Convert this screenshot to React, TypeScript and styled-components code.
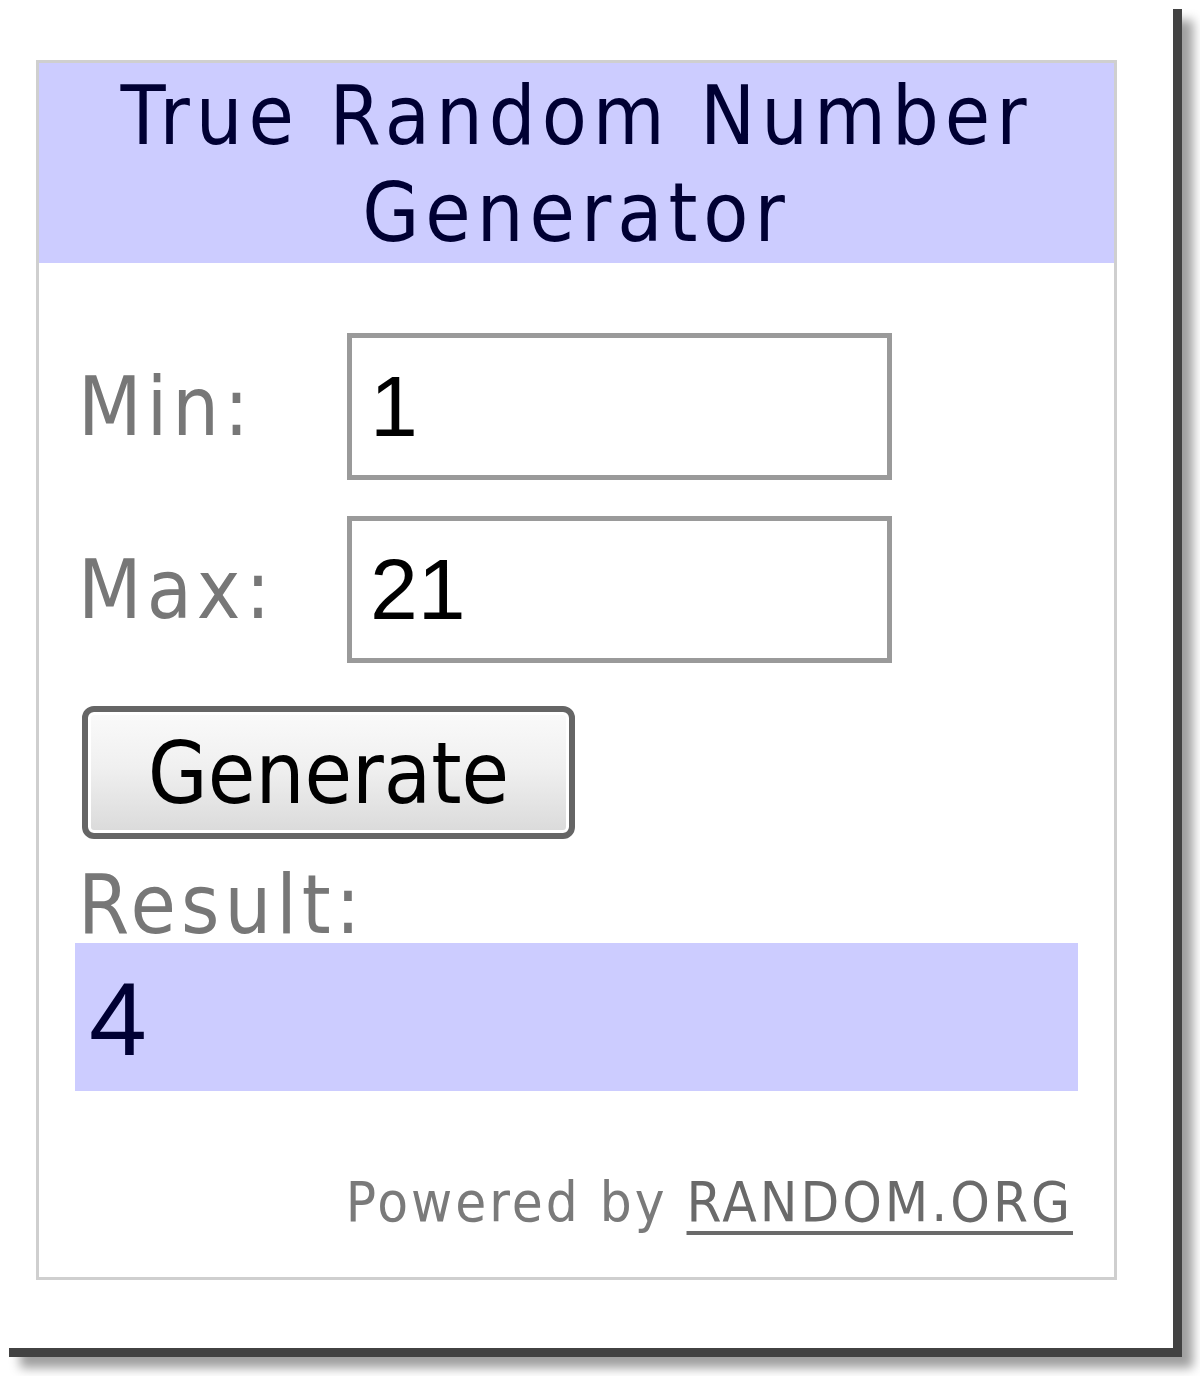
import * as React from "react";
import styled, { createGlobalStyle } from "styled-components";

const GlobalStyle = createGlobalStyle`
  html, body {
    margin: 0;
    padding: 0;
    background: #ffffff;
  }
  body {
    width: 1200px;
    height: 1376px;
    overflow: hidden;
  }
`;

const Card = styled.div`
  width: 1173px;
  height: 1348px;
  box-sizing: border-box;
  padding: 60px 0 0 36px;
  background: #ffffff;
  box-shadow: 9px 9px 0 #424242, 20px 20px 10px rgba(0, 0, 0, 0.38);
`;

const Widget = styled.div`
  width: 1081px;
  height: 1220px;
  box-sizing: border-box;
  border: 3px solid #cfcfcf;
  display: flex;
  flex-direction: column;
`;

const Header = styled.div`
  height: 200px;
  background: #ccccff;
  color: #000033;
  font-family: "DejaVu Sans Condensed", "DejaVu Sans", sans-serif;
  font-size: 82px;
  letter-spacing: 6px;
  line-height: 97px;
  text-align: center;
  padding-top: 4px;
  box-sizing: border-box;
`;

const Body = styled.div`
  flex: 1;
  display: flex;
  flex-direction: column;
  padding: 70px 36px 0 36px;
`;

const Row = styled.div`
  display: grid;
  grid-template-columns: 272px 545px;
  align-items: center;
  margin-bottom: 36px;
`;

const Label = styled.label`
  padding-left: 3px;
  color: #777777;
  font-family: "DejaVu Sans Condensed", "DejaVu Sans", sans-serif;
  font-size: 82px;
  letter-spacing: 5px;
`;

const Field = styled.input`
  width: 545px;
  height: 147px;
  box-sizing: border-box;
  border: 5px solid #9a9a9a;
  padding: 0 0 0 18px;
  font-family: "Liberation Sans", Arial, sans-serif;
  font-size: 86px;
  color: #000000;
  background: #ffffff;
  outline: none;
`;

const Button = styled.button`
  align-self: flex-start;
  margin: 7px 0 0 7px;
  width: 493px;
  height: 133px;
  border: 6px solid #656565;
  border-radius: 12px;
  background: linear-gradient(#fafafa 0%, #f0f0f0 45%, #dadada 100%);
  box-shadow: inset 0 0 0 3px #ffffff;
  font-family: "DejaVu Sans Condensed", "DejaVu Sans", sans-serif;
  font-size: 86px;
  color: #000000;
  padding: 0;
`;

const ResultLabel = styled(Label)`
  margin-top: 26px;
  line-height: 80px;
`;

const ResultBox = styled.div`
  height: 148px;
  background: #ccccff;
  color: #000033;
  font-family: "Liberation Sans", Arial, sans-serif;
  font-size: 104px;
  line-height: 152px;
  padding-left: 14px;
  margin-top: -2px;
`;

const Footer = styled.div`
  margin-top: 78px;
  text-align: right;
  padding-right: 8px;
  color: #7a7a7a;
  font-family: "DejaVu Sans Condensed", "DejaVu Sans", sans-serif;
  font-size: 56px;
  letter-spacing: 3px;
`;

const Link = styled.a`
  color: #6a6a6a;
  letter-spacing: 3px;
  margin-right: -3px;
  text-decoration: underline;
  text-decoration-thickness: 4px;
  text-underline-offset: 10px;
`;

export default function App() {
  return (
    <>
      <GlobalStyle />
      <Card>
        <Widget>
          <Header>
            True Random Number
            <br />
            Generator
          </Header>
          <Body>
            <Row>
              <Label>Min:</Label>
              <Field defaultValue="1" />
            </Row>
            <Row>
              <Label>Max:</Label>
              <Field defaultValue="21" />
            </Row>
            <Button>Generate</Button>
            <ResultLabel>Result:</ResultLabel>
            <ResultBox>4</ResultBox>
            <Footer>
              Powered by <Link>RANDOM.ORG</Link>
            </Footer>
          </Body>
        </Widget>
      </Card>
    </>
  );
}
